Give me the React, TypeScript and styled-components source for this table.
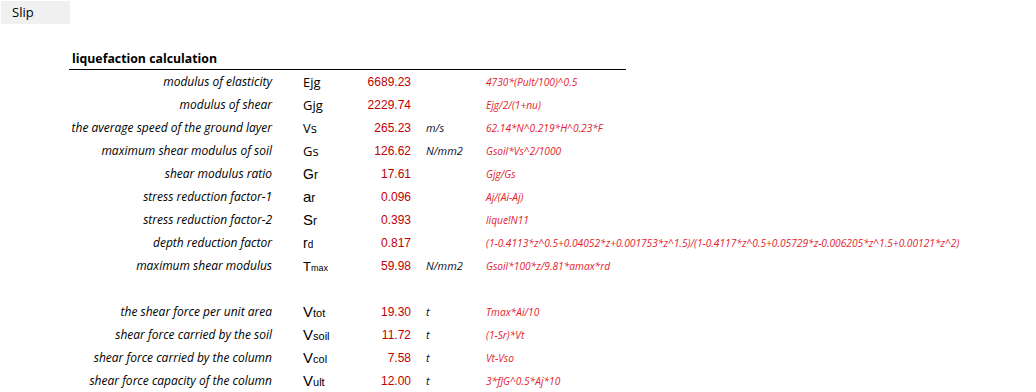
import React from 'react'
import styled, { createGlobalStyle } from 'styled-components'

const GlobalStyle = createGlobalStyle`
  html, body {
    margin: 0;
    padding: 0;
    background: #ffffff;
    font-family: 'Open Sans', 'Liberation Sans', sans-serif;
  }
`

type Row = {
  label: string
  sym: React.ReactNode
  value: string
  unit?: string
  formula: string
}

const Page = styled.div`
  width: 1036px;
  height: 392px;
  overflow: hidden;
`

const Tab = styled.div`
  margin: 1px 0 0 1px;
  width: 58px;
  height: 23px;
  padding-left: 11px;
  background: #f0f0f0;
  color: #000;
  font-size: 13px;
  line-height: 23px;
`

const Sheet = styled.div`
  margin: 24px 0 0 69px;
  display: flex;
  flex-direction: column;
`

const Title = styled.div`
  width: 554px;
  height: 21px;
  padding-left: 3px;
  border-bottom: 1px solid #000;
  font-size: 12.3px;
  font-weight: 700;
  line-height: 22px;
  color: #000;
`

const Line = styled.div`
  display: grid;
  grid-template-columns: 203px 68px 71px 75px auto;
  height: 23px;
  align-items: center;
  white-space: nowrap;
`

const Gap = styled.div`
  height: 23px;
`

const Label = styled.div`
  text-align: right;
  font-style: italic;
  font-size: 12px;
  color: #000;
`

const Sym = styled.div`
  padding-left: 31px;
  font-size: 13px;
  color: #000;
`

const Big = styled.span<{ $size?: number }>`
  font-family: 'Liberation Sans', Arial, sans-serif;
  font-size: ${(p) => p.$size ?? 14}px;
`

const Small = styled.span<{ $size?: number }>`
  font-family: 'Liberation Sans', Arial, sans-serif;
  font-size: ${(p) => p.$size ?? 10}px;
`

const Value = styled.div`
  text-align: right;
  font-family: 'Liberation Sans', Arial, sans-serif;
  font-size: 12px;
  color: #c00000;
`

const Unit = styled.div`
  padding-left: 15px;
  font-style: italic;
  font-size: 11px;
  color: #0d0d26;
`

const Formula = styled.div`
  font-style: italic;
  font-size: 10.2px;
  color: #e21b2e;
`

const sub = (main: string, s: string, mainSize = 14, subSize = 10) => (
  <>
    <Big $size={mainSize}>{main}</Big>
    <Small $size={subSize}>{s}</Small>
  </>
)

const top: Row[] = [
  { label: 'modulus of elasticity', sym: 'Ejg', value: '6689.23', formula: '4730*(Pult/100)^0.5' },
  { label: 'modulus of shear', sym: 'Gjg', value: '2229.74', formula: 'Ejg/2/(1+nu)' },
  { label: 'the average speed of the ground layer', sym: 'Vs', value: '265.23', unit: 'm/s', formula: '62.14*N^0.219*H^0.23*F' },
  { label: 'maximum shear modulus of soil', sym: 'Gs', value: '126.62', unit: 'N/mm2', formula: 'Gsoil*Vs^2/1000' },
  { label: 'shear modulus ratio', sym: sub('G', 'r', 14, 12), value: '17.61', formula: 'Gjg/Gs' },
  { label: 'stress reduction factor-1', sym: sub('a', 'r', 15, 12), value: '0.096', formula: 'Aj/(Ai-Aj)' },
  { label: 'stress reduction factor-2', sym: sub('S', 'r', 15, 12), value: '0.393', formula: 'lique!N11' },
  {
    label: 'depth reduction factor',
    sym: sub('r', 'd', 14, 10),
    value: '0.817',
    formula: '(1-0.4113*z^0.5+0.04052*z+0.001753*z^1.5)/(1-0.4117*z^0.5+0.05729*z-0.006205*z^1.5+0.00121*z^2)',
  },
  { label: 'maximum shear modulus', sym: sub('T', 'max', 13, 9), value: '59.98', unit: 'N/mm2', formula: 'Gsoil*100*z/9.81*amax*rd' },
]

const bottom: Row[] = [
  { label: 'the shear force per unit area', sym: sub('V', 'tot', 15, 11), value: '19.30', unit: 't', formula: 'Tmax*Ai/10' },
  { label: 'shear force carried by the soil', sym: sub('V', 'soil', 15, 11), value: '11.72', unit: 't', formula: '(1-Sr)*Vt' },
  { label: 'shear force carried by the column', sym: sub('V', 'col', 15, 11), value: '7.58', unit: 't', formula: 'Vt-Vso' },
  { label: 'shear force capacity of the column', sym: sub('V', 'ult', 15, 11), value: '12.00', unit: 't', formula: '3*fJG^0.5*Aj*10' },
]

function CalcRow({ row }: { row: Row }) {
  return (
    <Line>
      <Label>{row.label}</Label>
      <Sym>{row.sym}</Sym>
      <Value>{row.value}</Value>
      <Unit>{row.unit ?? ''}</Unit>
      <Formula>{row.formula}</Formula>
    </Line>
  )
}

export default function App() {
  return (
    <Page>
      <GlobalStyle />
      <Tab>Slip</Tab>
      <Sheet>
        <Title>liquefaction calculation</Title>
        {top.map((r) => (
          <CalcRow key={r.label} row={r} />
        ))}
        <Gap />
        {bottom.map((r) => (
          <CalcRow key={r.label} row={r} />
        ))}
      </Sheet>
    </Page>
  )
}
